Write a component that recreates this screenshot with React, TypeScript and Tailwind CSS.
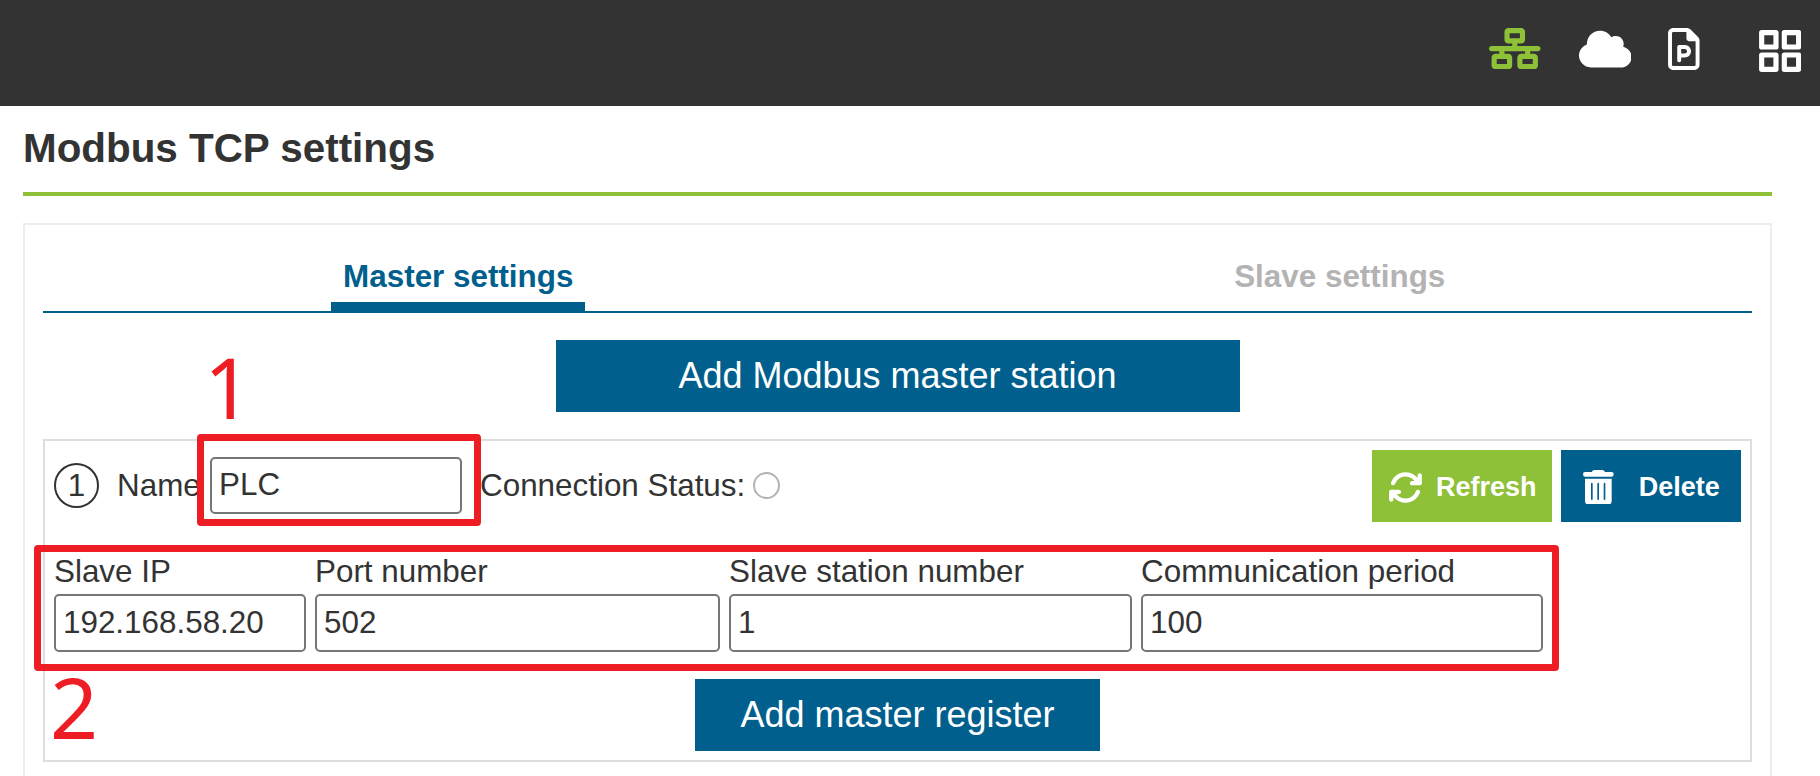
import React from "react";
import { FaNetworkWired, FaCloud, FaRegFilePowerpoint, FaArrowsRotate } from "react-icons/fa6";

function GridIcon() {
  return (
    <svg viewBox="0 0 127 126" className="h-[42px] w-[42.3px]" fill="none" stroke="#fff" strokeWidth="15.5" strokeLinejoin="round">
      <rect x="8" y="8" width="43" height="43" />
      <rect x="76" y="8" width="43" height="43" />
      <rect x="8" y="75" width="43" height="43" />
      <rect x="76" y="75" width="43" height="43" />
    </svg>
  );
}

function TrashIcon() {
  return (
    <svg viewBox="0 0 92 104" className="h-[34.7px] w-[30.7px]" fill="#fff">
      <path d="M6 6H26Q29 0 34 0H58Q63 0 66 6H86Q92 6 92 13Q92 20 86 20H6Q0 20 0 13Q0 6 6 6Z" />
      <path
        fillRule="evenodd"
        d="M6 26H86V92Q86 104 74 104H18Q6 104 6 92ZM24 41Q24 38 26.5 38Q29 38 29 41V87Q29 90 26.5 90Q24 90 24 87ZM43 41Q43 38 45.5 38Q48 38 48 41V87Q48 90 45.5 90Q43 90 43 87ZM62 41Q62 38 64.5 38Q67 38 67 41V87Q67 90 64.5 90Q62 90 62 87Z"
      />
    </svg>
  );
}

function TextInput({ value, className }: { value: string; className: string }) {
  return (
    <input
      defaultValue={value}
      className={`box-border rounded-[5px] border-2 border-[#767676] bg-white px-[7px] pt-0 pb-[1px] text-[31.4px] text-[#333] outline-none ${className}`}
    />
  );
}

function Field({ label, value, className }: { label: string; value: string; className: string }) {
  return (
    <label className={`flex flex-col ${className}`}>
      <span className="h-9 whitespace-nowrap leading-[27px]">{label}</span>
      <TextInput value={value} className="h-[58px] w-full" />
    </label>
  );
}

export default function App() {
  return (
    <div className="relative flex h-[776px] w-[1820px] flex-col overflow-hidden bg-white font-['Liberation_Sans',Arial,sans-serif] text-[31.4px] text-[#333]">
      <header className="flex h-[106px] shrink-0 items-start justify-end bg-[#333] pr-[19px] text-white">
        <FaNetworkWired className="mt-[28px] h-[41.3px] w-[51.5px] text-[#8ec038]" />
        <FaCloud className="mt-[27.7px] ml-[38px] h-[42.1px] w-[52.6px]" />
        <FaRegFilePowerpoint className="mt-[27.8px] ml-[37px] h-[42px] w-[31.6px]" />
        <div className="mt-[29.7px] ml-[59px]">
          <GridIcon />
        </div>
      </header>

      <main className="ml-[23px] flex w-[1749px] flex-col">
        <h1 className="h-[90px] border-b-4 border-[#8ec038] pt-[19px] text-[40.4px] font-bold leading-[46px]">Modbus TCP settings</h1>

        <section className="mt-[27px] h-[620px] border-2 border-[#ededed] px-[18px]">
          <nav className="flex h-[88px] border-b-2 border-[#005f8d] font-bold">
            <div className="flex w-1/2 justify-center">
              <div className="mr-[24px] h-[88px] w-[254px] shrink-0 border-b-[11px] border-[#005f8d] pt-[34px] text-center leading-[36px] text-[#005f8d]">
                Master settings
              </div>
            </div>
            <div className="flex w-1/2 justify-center">
              <div className="mr-[-30px] pt-[34px] leading-[36px] text-[#b3b3b3]">Slave settings</div>
            </div>
          </nav>

          <div className="mt-[27px] flex justify-center">
            <button className="h-[72px] w-[684px] bg-[#005f8d] text-[36px] text-white">Add Modbus master station</button>
          </div>

          <div className="mt-[27px] h-[323px] border-2 border-[#dedede] p-[9px]">
            <div className="flex h-[72px] items-center">
              <div className="-mt-[1px] flex h-[45px] w-[45px] items-center justify-center rounded-full border-2 border-[#333] leading-none">1</div>
              <span className="ml-[18px] w-[93px]">Name</span>
              <TextInput value="PLC" className="-mt-[1px] h-[57px] w-[252px]" />
              <span className="ml-[18px] whitespace-nowrap">Connection Status:</span>
              <span className="-mt-[1px] ml-[8px] h-[27px] w-[27px] rounded-full border-2 border-[#b3b3b3]" />
              <button className="ml-auto flex h-[72px] w-[180px] items-center bg-[#8ec038] pt-[2px] pl-[16px] text-[27px] font-bold text-white">
                <FaArrowsRotate className="h-[35px] w-[35px] shrink-0" />
                <span className="ml-[13px]">Refresh</span>
              </button>
              <button className="ml-[9px] flex h-[72px] w-[180px] items-center bg-[#005f8d] pt-[2px] pl-[22px] text-[27px] font-bold text-white">
                <TrashIcon />
                <span className="ml-[25px]">Delete</span>
              </button>
            </div>

            <div className="mt-9 flex gap-[9px]">
              <Field label="Slave IP" value="192.168.58.20" className="w-[252px]" />
              <Field label="Port number" value="502" className="w-[405px]" />
              <Field label="Slave station number" value="1" className="w-[403px]" />
              <Field label="Communication period" value="100" className="w-[402px]" />
            </div>

            <div className="mt-[27px] flex justify-center">
              <button className="h-[72px] w-[405px] bg-[#005f8d] text-[36px] text-white">Add master register</button>
            </div>
          </div>
        </section>
      </main>

      <div className="absolute left-[197px] top-[434px] h-[92px] w-[284px] rounded-[4px] border-[7px] border-[#ee1c23]" />
      <div className="absolute left-[34px] top-[545px] h-[126px] w-[1525px] rounded-[4px] border-[7px] border-[#ee1c23]" />
      <span className="absolute left-[204px] top-[345px] font-['Noto_Sans',sans-serif] text-[84px] leading-none text-[#ee1c23]">1</span>
      <span className="absolute left-[50px] top-[665px] font-['Noto_Sans',sans-serif] text-[84px] leading-none text-[#ee1c23]">2</span>
    </div>
  );
}
